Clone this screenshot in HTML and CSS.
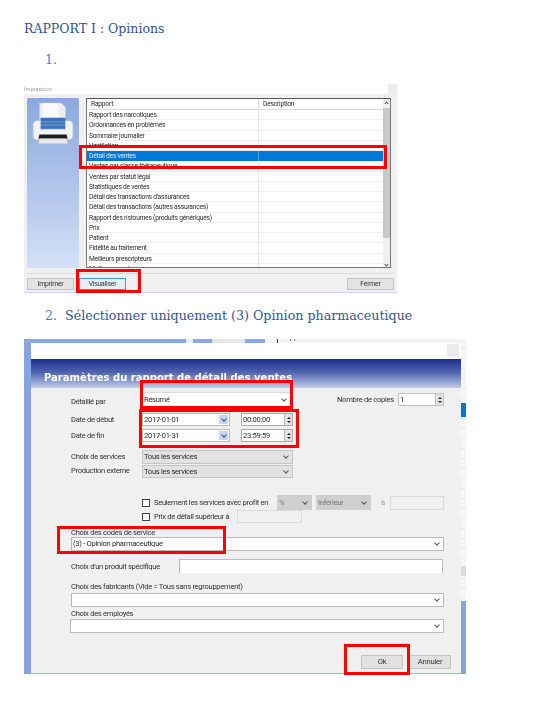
FILE: index.html
```html
<!DOCTYPE html>
<html lang="fr">
<head>
<meta charset="utf-8">
<title>RAPPORT I : Opinions</title>
<link rel="stylesheet" href="styles.css">
</head>
<body>
<main class="page">
  <h1 class="doc-title">RAPPORT I : Opinions</h1>
  <p class="step step-first"><span class="step-num">1.</span></p>

  <section class="shot shot-print">
    <div class="soft">
      <div class="p-title"><span>Impression</span><i class="p-close"></i></div>
      <div class="p-body">
        <div class="p-main">
          <div class="p-side">
            <svg class="printer" width="46" height="46" viewBox="0 0 44 44" aria-hidden="true">
              <path d="M9 2h21l4 4v16H9z" fill="#eeeef2" stroke="#c3c7d0" stroke-width=".6"/>
              <path d="M12 2h15v14H12z" fill="#fafafa"/>
              <path d="M10 16h24v11H10z" fill="#3a74bb"/>
              <path d="M10 20h24M10 23h24" stroke="#86abd9" stroke-width=".8"/>
              <path d="M6 19h4v8h24v-8h4c2 0 3 2 3 4v10c0 2-1 4-3 4H6c-2 0-3-2-3-4V23c0-2 1-4 3-4z" fill="#f2f3f5" stroke="#c4c8d0" stroke-width=".6"/>
              <path d="M9 32h26l1 4H8z" fill="#1d1d1f"/>
              <path d="M9 36h26l1 5H8z" fill="#e9e9e9" stroke="#bbb" stroke-width=".5"/>
            </svg>
          </div>
          <div class="p-list">
            <div class="p-table">
              <div class="p-head"><span>Rapport</span><span>Description</span></div>
              <div class="p-row"><span>Rapport des narcotiques</span><span></span></div>
              <div class="p-row"><span>Ordonnances en problèmes</span><span></span></div>
              <div class="p-row"><span>Sommaire journalier</span><span></span></div>
              <div class="p-row"><span>Ventilation</span><span></span></div>
              <div class="p-row p-row-sel"><span>Détail des ventes</span><span></span></div>
              <div class="p-row"><span>Ventes par classe thérapeutique</span><span></span></div>
              <div class="p-row"><span>Ventes par statut légal</span><span></span></div>
              <div class="p-row"><span>Statistiques de ventes</span><span></span></div>
              <div class="p-row"><span>Détail des transactions d'assurances</span><span></span></div>
              <div class="p-row"><span>Détail des transactions (autres assurances)</span><span></span></div>
              <div class="p-row"><span>Rapport des ristournes (produits génériques)</span><span></span></div>
              <div class="p-row"><span>Prix</span><span></span></div>
              <div class="p-row"><span>Patient</span><span></span></div>
              <div class="p-row"><span>Fidélité au traitement</span><span></span></div>
              <div class="p-row"><span>Meilleurs prescripteurs</span><span></span></div>
              <div class="p-row"><span>Meilleurs vendeurs</span><span></span></div>
            </div>
            <div class="p-scroll">
              <i class="chev chev-up"></i>
              <div class="p-thumb"></div>
              <i class="chev"></i>
            </div>
          </div>
        </div>
        <div class="p-foot">
          <button class="btn p-btn" type="button">Imprimer</button>
          <button class="btn p-btn p-btn-focus" type="button">Visualiser</button>
          <button class="btn p-btn p-btn-end" type="button">Fermer</button>
        </div>
      </div>
    </div>
    <div class="mark mark-detail"></div>
    <div class="mark mark-view"></div>
  </section>

  <p class="step step-second"><span class="step-num">2.</span><span>Sélectionner uniquement (3) Opinion pharmaceutique</span></p>

  <section class="shot shot-params">
    <div class="soft">
      <div class="behind">
        <i class="b-blue b-w1"></i><i class="b-gap b-w2"></i><i class="b-blue b-w3"></i><i class="b-gray b-w4"></i><i class="b-blue b-w5"></i>
        <span class="behind-text">Rapport</span>
      </div>
      <div class="dialog">
        <div class="d-title"><i class="d-close"></i></div>
        <div class="d-head">Paramètres du rapport de détail des ventes</div>
        <div class="d-form">
          <div class="row r-detail">
            <label class="lab lab-a lab-low">Détaillé par</label>
            <div class="field f-main"><span>Résumé</span><i class="chev"></i></div>
            <label class="lab lab-copies">Nombre de copies</label>
            <div class="field f-num"><span>1</span><i class="spin"></i></div>
          </div>
          <div class="row r-start">
            <label class="lab lab-a">Date de début</label>
            <div class="field f-date"><span>2017-01-01</span><i class="cal"><i class="chev"></i></i></div>
            <div class="field f-time"><span>00:00:00</span><i class="spin"></i></div>
          </div>
          <div class="row r-end">
            <label class="lab lab-a lab-up">Date de fin</label>
            <div class="field f-date"><span>2017-01-31</span><i class="cal"><i class="chev"></i></i></div>
            <div class="field f-time"><span>23:59:59</span><i class="spin"></i></div>
          </div>
          <div class="row r-serv">
            <label class="lab lab-a lab-up2">Choix de services</label>
            <div class="field f-gray"><span>Tous les services</span><i class="chev"></i></div>
          </div>
          <div class="row r-prod">
            <label class="lab lab-a lab-up2">Production externe</label>
            <div class="field f-gray"><span>Tous les services</span><i class="chev"></i></div>
          </div>
          <div class="row r-profit">
            <i class="check"></i>
            <label class="lab lab-check">Seulement les services avec profit en</label>
            <div class="field f-dis f-pct"><span>%</span><i class="chev"></i></div>
            <div class="field f-dis f-inf"><span>Inférieur</span><i class="chev"></i></div>
            <span class="lab lab-to">à</span>
            <div class="field f-empty f-to"></div>
          </div>
          <div class="row r-price">
            <i class="check"></i>
            <label class="lab lab-check lab-price">Prix de détail supérieur à</label>
            <div class="field f-empty f-price"></div>
          </div>
          <label class="lab lab-block lab-codes">Choix des codes de service</label>
          <div class="field f-wide f-codes"><span>(3) - Opinion pharmaceutique</span><i class="chev"></i></div>
          <div class="row r-product">
            <label class="lab lab-specific">Choix d'un produit spécifique</label>
            <div class="field f-product"></div>
          </div>
          <label class="lab lab-block lab-makers">Choix des fabricants (Vide = Tous sans regrouppement)</label>
          <div class="field f-wide f-makers"><span></span><i class="chev"></i></div>
          <label class="lab lab-block lab-staff">Choix des employés</label>
          <div class="field f-wide f-staff"><span></span><i class="chev"></i></div>
          <div class="d-actions">
            <button class="btn d-btn" type="button">Ok</button>
            <button class="btn d-btn" type="button">Annuler</button>
          </div>
        </div>
      </div>
    </div>
    <div class="mark mark-resume"></div>
    <div class="mark mark-dates"></div>
    <div class="mark mark-codes"></div>
    <div class="mark mark-ok"></div>
  </section>
</main>
</body>
</html>
```
FILE: styles.css
```css
* { box-sizing: border-box; }
html, body { margin: 0; padding: 0; background: #fff; }
.page { width: 560px; height: 718px; padding: 20px 0 0 24px; overflow: hidden; font-family: "DejaVu Serif", serif; }

.doc-title { margin: 0; height: 18px; font-size: 12.5px; line-height: 18px; font-weight: 400; color: #2f5496; }
.step { margin: 0; display: flex; height: 18px; line-height: 18px; font-size: 12.65px; color: #2f5496; padding-left: 21px; }
.step-first { margin-top: 13px; }
.step-second { margin-top: 14px; }
.step-num { width: 20px; color: #4a80d4; }

.shot { position: relative; font-family: Roboto, "Liberation Sans", sans-serif; color: #2c2c2c; }
.soft { height: 100%; filter: blur(.45px); }
.mark { position: absolute; border: 3px solid #f00; }

/* Impression window */
.shot-print { width: 373px; height: 210px; margin-top: 14px; }
.p-title { height: 11px; display: flex; justify-content: space-between; align-items: center; background: #fff; font-size: 5.6px; color: #a0a0a0; }
.p-close { width: 9px; height: 10px; background: #ececec; }
.p-body { height: 199px; background: #f0f0f0; border-bottom: 1px solid #c9d5ee; padding: 4px 3px 0; }
.p-main { display: flex; gap: 7px; height: 170px; }
.p-side { width: 52px; background: linear-gradient(#8aa7df, #d3e0f6); border-radius: 2px; padding: 3px 0 0 3px; }
.printer { display: block; }
.p-list { width: 305px; display: flex; background: #fff; border: 1px solid #777; border-top-color: #555; overflow: hidden; }
.p-table { width: 296px; font-size: 6.7px; letter-spacing: -.23px; }
.p-head, .p-row { display: grid; grid-template-columns: 172px 1fr; }
.p-head { height: 11px; line-height: 11px; border-bottom: 1px solid #ddd; }
.p-head span { padding-left: 4px; border-right: 1px solid #e2e2e2; }
.p-head span:last-child { border: 0; }
.p-row { height: 10.25px; line-height: 10.25px; border-bottom: 1px solid #eee; }
.p-row span { padding-left: 2px; border-right: 1px solid #e6e6e6; white-space: nowrap; }
.p-row span:last-child { border: 0; }
.p-row-sel { background: #0078d7; color: #dfeeff; border: 0; }
.p-row-sel span { border-color: #4a9fe3; }
.p-scroll { flex: 1; display: flex; flex-direction: column; align-items: center; background: #f0f0f0; }
.p-thumb { width: 100%; height: 130px; margin: 5px 0 27px; background: #c9c9c9; }
.p-foot { display: flex; gap: 5px; height: 22px; margin-top: 5px; padding-top: 4px; border-top: 1px solid #dcdcdc; }
.btn { padding: 0; border: 1px solid #c4c4c4; background: #e3e3e3; color: #333; font-family: Roboto, "Liberation Sans", sans-serif; text-align: center; letter-spacing: -.2px; }
.p-btn { width: 47px; height: 12px; font-size: 6.8px; line-height: 10px; }
.p-btn-focus { background: #e7eef6; border-color: #3f93d8; }
.p-btn-end { margin-left: auto; }
.mark-detail { left: 55px; top: 62px; width: 308px; height: 24px; }
.mark-view { left: 52px; top: 186px; width: 65px; height: 24px; }

/* Parameters window */
.shot-params { width: 442px; height: 335px; margin-top: 14px; background: linear-gradient(#0078d7, #0078d7) 437px 64px / 5px 14px no-repeat, linear-gradient(#dcdcdc, #dcdcdc) 437px 227px / 5px 10px no-repeat, repeating-linear-gradient(#f6f6f6 0 9px, #e6e6e6 9px 10px) 437px 0 / 5px 262px no-repeat, #86a5e0; }
.shot-params .soft { display: flex; flex-direction: column; }
.behind { display: flex; height: 4px; overflow: hidden; background: #f3f3f3; font-size: 7px; line-height: 1; }
.behind i { display: block; }
.b-blue { background: #8aa8e2; }
.b-gray { background: #e8e6e2; }
.b-gap { background: #ececec; }
.b-w1 { width: 162px; } .b-w2 { width: 7px; } .b-w3 { width: 19px; } .b-w4 { width: 33px; } .b-w5 { width: 20px; }
.behind-text { margin: -5px 0 0 12px; padding-left: 4px; border-left: 1px solid #444; height: 9px; }
.dialog { flex: 1; width: 430px; margin-left: 7px; background: #f0f0f0; border-bottom: 1px solid #9fb3de; }
.d-title { height: 16px; padding: 1px 2px 0 0; display: flex; justify-content: flex-end; background: #fff; }
.d-close { width: 12px; height: 13px; background: #ebebeb; }
.d-head { height: 29px; padding: 12px 0 0 13px; background: linear-gradient(#1e2f8e, #4e62ad 45%, #c2cde7); color: #fff; font-family: "DejaVu Sans", sans-serif; font-weight: 700; font-size: 10.05px; line-height: 14px; white-space: nowrap; }
.d-form { display: flex; flex-direction: column; align-items: flex-start; padding: 4px 0 0 40px; font-size: 7.6px; letter-spacing: -.3px; }
.row { display: flex; align-items: center; }
.lab { white-space: nowrap; line-height: 9px; color: #333; }
.lab-a { width: 71px; flex: none; }
.lab-low { padding-top: 4px; }
.lab-up { padding-bottom: 1px; }
.lab-up2 { padding-bottom: 2px; }
.field { display: flex; align-items: center; justify-content: space-between; background: #fff; border: 1px solid #d9d9d9; padding: 0 0 0 1px; line-height: 10px; white-space: nowrap; }
.chev { display: block; flex: none; width: 4px; height: 4px; margin: -2px 4px 0 0; border-right: 1px solid #555; border-bottom: 1px solid #555; transform: rotate(45deg); }
.chev-up { margin: 3px 0 -2px; transform: rotate(225deg); }
.p-scroll .chev { width: 3px; height: 3px; margin-right: 0; }

.r-detail { height: 15px; }
.f-main { width: 149px; height: 15px; }
.lab-copies { margin-left: 46px; width: 61px; }
.f-num { width: 46px; height: 13px; border-color: #c4c4c4; }
.r-start { height: 13px; margin-top: 6px; }
.r-end { height: 13px; margin-top: 3px; }
.f-date { width: 88px; height: 13px; border-color: #bbb; padding-right: 1px; }
.f-time { width: 52px; height: 13px; margin-left: 11px; border-color: #aaa; }
.cal { display: flex; align-items: center; justify-content: center; width: 9px; height: 9px; background: #c6d6ef; }
.cal .chev { margin: -2px 0 0; border-color: #2b4f91; }
.spin { display: flex; flex-direction: column; align-items: center; justify-content: center; gap: 2px; flex: none; width: 8px; height: 100%; background: #e3e3e3; border-left: 1px solid #bbb; }
.spin::before, .spin::after { content: ""; border-left: 2px solid transparent; border-right: 2px solid transparent; }
.spin::before { border-bottom: 2.5px solid #222; }
.spin::after { border-top: 2.5px solid #222; }
.r-serv { height: 14px; margin-top: 8px; }
.r-prod { height: 13px; margin-top: 1px; }
.f-gray { width: 151px; height: 100%; background: #e2e2e2; border-color: #c6c6c6; }
.r-profit { height: 15px; margin-top: 17px; padding-left: 71px; }
.r-price { height: 13px; padding-left: 71px; }
.check { width: 8px; height: 8px; flex: none; background: #fff; border: 1px solid #444; }
.lab-check { margin-left: 4px; width: 123px; flex: none; }
.lab-price { width: 83px; }
.f-dis { height: 100%; background: #cfcfcf; border-color: #cfcfcf; color: #777; }
.f-pct { width: 35px; }
.f-inf { width: 55px; margin-left: 4px; }
.lab-to { width: 19px; padding-left: 10px; color: #999; }
.f-empty { background: #f0f0f0; border-color: #dadada; }
.f-to { width: 54px; height: 14px; }
.f-price { width: 65px; height: 13px; }
.lab-block { display: block; height: 10px; line-height: 11px; }
.lab-codes { margin-top: 4px; }
.f-wide { width: 373px; height: 14px; border-color: #bbb; }
.r-product { height: 14px; margin-top: 8px; }
.lab-specific { width: 108px; }
.f-product { width: 264px; height: 14px; border-color: #bbb; border-bottom: 0; }
.lab-makers { margin-top: 8px; }
.f-makers { margin-top: 2px; }
.lab-staff { margin-top: 1px; }
.f-staff { margin-top: 1px; margin-left: -1px; width: 374px; }
.d-actions { display: flex; gap: 6px; margin: 22px 0 0 290px; }
.d-btn { width: 42px; height: 14px; font-size: 7.6px; line-height: 12px; background: #e1e1e1; }
.mark-resume { left: 116px; top: 41px; width: 153px; height: 29px; }
.mark-dates { left: 115px; top: 70px; width: 160px; height: 39px; }
.mark-codes { left: 33px; top: 187px; width: 169px; height: 28px; }
.mark-ok { left: 320px; top: 305px; width: 66px; height: 31px; }
```
